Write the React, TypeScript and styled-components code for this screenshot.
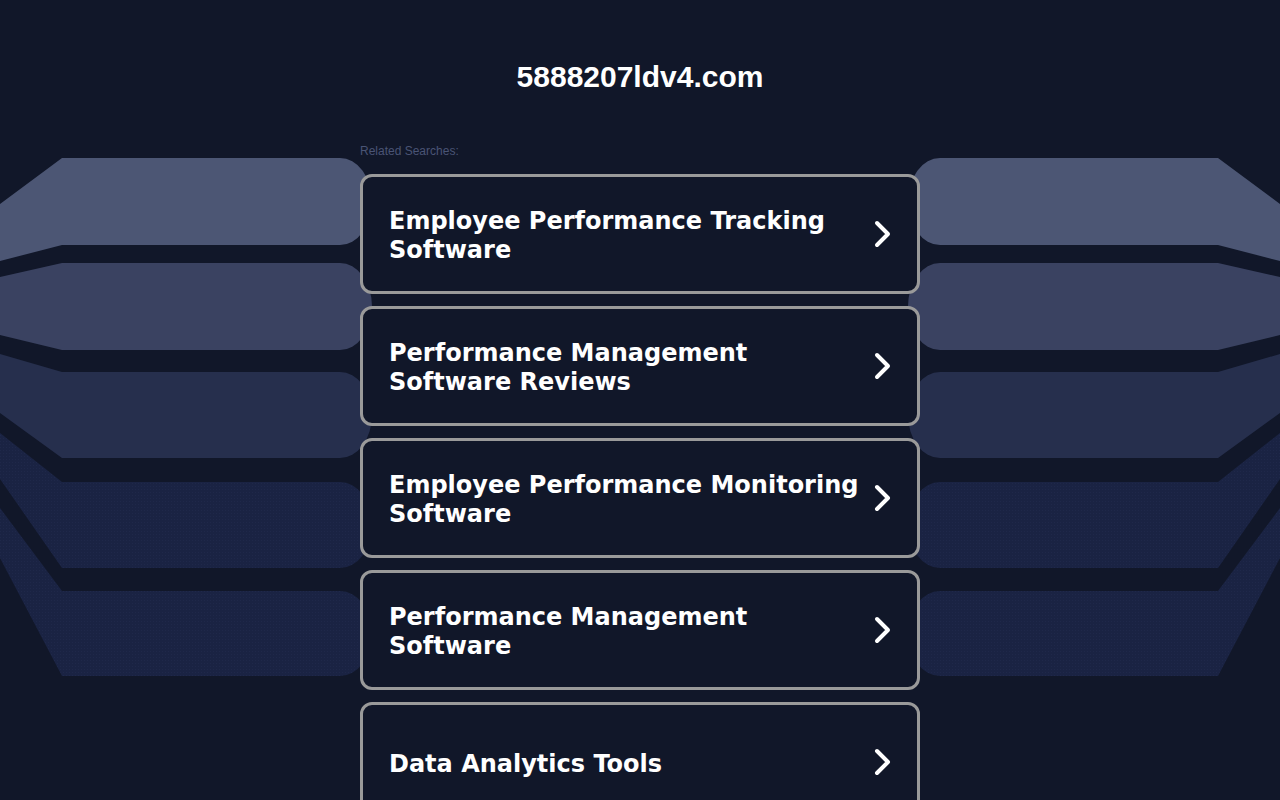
import styled, { createGlobalStyle } from "styled-components";

const GlobalStyle = createGlobalStyle`
  html, body {
    margin: 0;
    padding: 0;
    background: #111729;
  }
  body {
    font-family: "Liberation Sans", Arial, sans-serif;
    overflow: hidden;
  }
`;

const Page = styled.div`
  position: relative;
  width: 1280px;
  height: 800px;
  overflow: hidden;
  background: #111729;
`;

const Backdrop = styled.svg`
  position: absolute;
  left: 0;
  top: 0;
  width: 1280px;
  height: 800px;
  z-index: 0;
`;

const Content = styled.div`
  position: relative;
  z-index: 1;
  display: flex;
  flex-direction: column;
  align-items: center;
`;

const Title = styled.h1`
  margin: 60px 0 0;
  font-family: "Liberation Sans", Arial, sans-serif;
  font-weight: 700;
  font-size: 30px;
  line-height: 34px;
  color: #ffffff;
`;

const Listing = styled.div`
  width: 560px;
  margin-top: 50px;
  display: flex;
  flex-direction: column;
`;

const Label = styled.div`
  font-size: 12px;
  line-height: 14px;
  color: #4a5475;
  margin-bottom: 16px;
`;

const Cards = styled.div`
  display: flex;
  flex-direction: column;
  gap: 12px;
`;

const Card = styled.a`
  box-sizing: border-box;
  height: 120px;
  display: flex;
  align-items: center;
  justify-content: space-between;
  gap: 2px;
  padding: 0 26px 0 26px;
  border: 3px solid #9a9a9a;
  border-radius: 12px;
  background: #111729;
  color: #ffffff;
  text-decoration: none;
  cursor: pointer;
`;

const CardText = styled.span`
  padding-top: 4px;
  font-family: "DejaVu Sans", Verdana, sans-serif;
  font-weight: 700;
  font-size: 24px;
  line-height: 29px;
`;

const Chevron = () => (
  <svg width="18" height="28" viewBox="0 0 18 28" style={{ flexShrink: 0 }}>
    <polyline
      points="4,3 15,14 4,25"
      fill="none"
      stroke="#ffffff"
      strokeWidth="4"
      strokeLinecap="round"
      strokeLinejoin="round"
    />
  </svg>
);

type Band = {
  top: number;
  bottom: number;
  edgeTop: number;
  edgeBottom: number;
  fill: string;
  dotted?: boolean;
};

const bands: Band[] = [
  { top: 158, bottom: 245, edgeTop: 204, edgeBottom: 261, fill: "#4c5674" },
  { top: 263, bottom: 350, edgeTop: 277, edgeBottom: 335, fill: "#3a4261" },
  { top: 372, bottom: 458, edgeTop: 354, edgeBottom: 413, fill: "#262f4d" },
  { top: 482, bottom: 568, edgeTop: 433, edgeBottom: 479, fill: "#1b2443", dotted: true },
  { top: 591, bottom: 676, edgeTop: 508, edgeBottom: 558, fill: "#1a2242", dotted: true },
];

const bandPath = (b: Band) => {
  const ry = (b.bottom - b.top) / 2;
  return `M0 ${b.edgeTop} L62 ${b.top} L340 ${b.top} A32 ${ry} 0 0 1 340 ${b.bottom} L62 ${b.bottom} L0 ${b.edgeBottom} Z`;
};

const items = [
  "Employee Performance Tracking Software",
  "Performance Management Software Reviews",
  "Employee Performance Monitoring Software",
  "Performance Management Software",
  "Data Analytics Tools",
];

export default function App() {
  return (
    <Page>
      <GlobalStyle />
      <Backdrop viewBox="0 0 1280 800">
        <defs>
          <pattern id="dots" width="3" height="3" patternUnits="userSpaceOnUse">
            <rect width="3" height="3" fill="#1a2343" />
            <rect width="1" height="1" fill="#1f284a" />
          </pattern>
        </defs>
        {[false, true].map((mirror) => (
          <g key={String(mirror)} transform={mirror ? "translate(1280 0) scale(-1 1)" : undefined}>
            {bands.map((b, i) => (
              <path key={i} d={bandPath(b)} fill={b.dotted ? "url(#dots)" : b.fill} />
            ))}
          </g>
        ))}
      </Backdrop>
      <Content>
        <Title>5888207ldv4.com</Title>
        <Listing>
          <Label>Related Searches:</Label>
          <Cards>
            {items.map((t) => (
              <Card key={t}>
                <CardText>{t}</CardText>
                <Chevron />
              </Card>
            ))}
          </Cards>
        </Listing>
      </Content>
    </Page>
  );
}
